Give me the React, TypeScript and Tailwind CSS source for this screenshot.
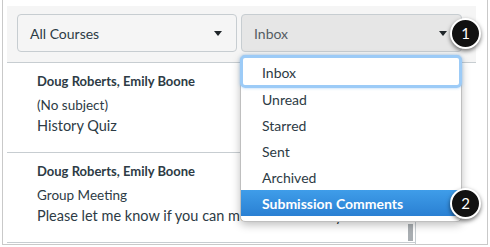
const messages = [
  { from: 'Doug Roberts, Emily Boone', subject: '(No subject)', body: 'History Quiz' },
  { from: 'Doug Roberts, Emily Boone', subject: 'Group Meeting', body: 'Please let me know if you can meet on Thursday afternoon.' }
];

const folders = ['Unread', 'Starred', 'Sent', 'Archived'];

const Caret = () => (
  <svg width="8" height="5" viewBox="0 0 8 5" className="shrink-0">
    <path d="M0 0h8L4 5z" fill="#1f2529" />
  </svg>
);

const Badge = ({ n, top }: { n: string; top: string }) => (
  <div
    className={`absolute left-[450px] ${top} flex h-[31px] w-[31px] items-center justify-center rounded-full border-2 border-white bg-[#111] text-[15px] text-white shadow-[0_2px_4px_rgba(0,0,0,0.55)]`}
  >
    {n}
  </div>
);

export default function App() {
  return (
    <div className="relative h-[247px] w-[490px] overflow-hidden bg-white font-['Lato','Noto_Sans',sans-serif] text-[#2d3b45]">
      <div className="ml-[2px] h-[245px] w-[486px] border-x border-b border-[#c9c9c9] pl-[4px] pr-[11px] pt-[6px]">
        {/* toolbar */}
        <div className="flex h-[57px] gap-[4px] border-b border-[#c7cdd1] bg-[#f5f5f5] pl-[10px] pt-[8px]">
          <div className="flex h-[38px] w-[220px] items-center justify-between rounded-[4px] border border-[#c7cdd1] bg-[#f5f5f5] pl-[12px] pr-[14px] text-[14px] text-[#2d3b45]">
            All Courses
            <Caret />
          </div>
          <div className="flex h-[38px] w-[221px] items-center justify-between rounded-[4px] border border-[#c7cdd1] bg-[#e6e6e6] pl-[12px] pr-[14px] text-[14px] text-[#555d63]">
            Inbox
            <Caret />
          </div>
        </div>

        {/* message list */}
        <div className="relative h-[181px] w-[409px] border-r border-[#c7cdd1]">
          {messages.map((m) => (
            <div key={m.subject} className="border-b border-[#c7cdd1] pb-[16px] pl-[30px] pt-[9px] last:border-b-0">
              <div className="text-[13px] font-bold leading-[18px]">{m.from}</div>
              <div className="mt-[6px] text-[13.5px] leading-[18px]">{m.subject}</div>
              <div className="mt-[2px] whitespace-nowrap text-[14.5px] leading-[20px]">{m.body}</div>
            </div>
          ))}
          <div className="absolute bottom-[3px] right-[2px] h-[17px] w-[5px] bg-[#a9aeb2]" />
        </div>
      </div>

      {/* open folder menu */}
      <div className="absolute left-[240px] top-[55px] h-[167px] w-[222px] rounded-[5px] border border-[#bfbfbf] bg-white text-[14px] shadow-[0_3px_8px_rgba(0,0,0,0.25)]">
        <div className="-mx-[1px] -mt-[1px] -mb-[2px] flex h-[33px] items-center rounded-[5px] border-[3px] border-[#9ccbf7] pl-[19px] pt-[2px] shadow-[0_0_3px_rgba(80,160,240,0.5)]">
          Inbox
        </div>
        {folders.map((f) => (
          <div key={f} className="flex h-[26px] items-center pl-[21px]">
            {f}
          </div>
        ))}
        <div className="flex h-[26px] items-center bg-gradient-to-b from-[#3f9de9] to-[#2a80d3] pl-[21px] font-bold text-white">
          Submission Comments
        </div>
      </div>

      <Badge n="1" top="top-[18px]" />
      <Badge n="2" top="top-[188px]" />
    </div>
  );
}
